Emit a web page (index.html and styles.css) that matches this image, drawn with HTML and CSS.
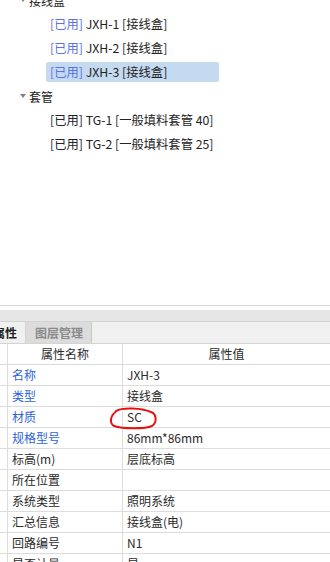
FILE: index.html
```html
<!DOCTYPE html>
<html lang="zh-CN">
<head>
    <meta charset="UTF-8">
    <meta name="viewport" content="width=device-width, initial-scale=1.0">
    <title>构件属性</title>
    <link rel="stylesheet" href="styles.css">
</head>
<body>
    <!-- 构件树 -->
    <div class="tree">
        <ul class="tree-list">
            <li class="group"><span class="arrow"></span>接线盒</li>
            <li class="item"><span class="node"><span class="used">[已用]</span> JXH-1 [接线盒]</span></li>
            <li class="item"><span class="node"><span class="used">[已用]</span> JXH-2 [接线盒]</span></li>
            <li class="item"><span class="node selected"><span class="used">[已用]</span> JXH-3 [接线盒]</span></li>
            <li class="group"><span class="arrow"></span>套管</li>
            <li class="item"><span class="node">[已用] TG-1 [一般填料套管 40]</span></li>
            <li class="item"><span class="node">[已用] TG-2 [一般填料套管 25]</span></li>
        </ul>
    </div>

    <!-- 属性面板 -->
    <div class="panel">
        <div class="band"></div>
        <div class="tabs">
            <span class="tab active">属性</span>
            <span class="tab">图层管理</span>
        </div>
        <div class="props">
            <div class="cell"></div><div class="cell head">属性名称</div><div class="cell head">属性值</div>

            <div class="cell"></div><div class="cell key">名称</div><div class="cell">JXH-3</div>
            <div class="cell"></div><div class="cell key">类型</div><div class="cell">接线盒</div>
            <div class="cell"></div><div class="cell key">材质</div>
            <div class="cell marked">SC
                <svg class="circle" width="50" height="26" viewBox="0 0 50 26">
                    <path d="M7 5 C14 1, 32 2, 42 6 C48 8, 48 17, 43 20 C36 23, 14 23, 5 20 C0 17, 1 9, 9 4" fill="none" stroke="#e5100f" stroke-width="2" stroke-linecap="round"/>
                </svg>
            </div>
            <div class="cell"></div><div class="cell key">规格型号</div><div class="cell">86mm*86mm</div>
            <div class="cell"></div><div class="cell">标高(m)</div><div class="cell">层底标高</div>
            <div class="cell"></div><div class="cell">所在位置</div><div class="cell"></div>
            <div class="cell"></div><div class="cell">系统类型</div><div class="cell">照明系统</div>
            <div class="cell"></div><div class="cell">汇总信息</div><div class="cell">接线盒(电)</div>
            <div class="cell"></div><div class="cell">回路编号</div><div class="cell">N1</div>
            <div class="cell"></div><div class="cell">是否计量</div><div class="cell">是</div>
        </div>
    </div>
</body>
</html>
```

FILE: styles.css
```css
body {
    margin: 0;
    padding: 0;
    background: #ffffff;
    color: #222;
    font-family: "Noto Sans CJK SC", sans-serif;
    font-size: 12px;
    overflow: hidden;
    height: 562px;
}

/* 构件树 */
.tree {
    height: 305px;
    overflow: hidden;
}
.tree-list {
    list-style: none;
    margin: -12px 0 0 0;
    padding: 0;
}
.tree-list li {
    display: flex;
    align-items: center;
    height: 24px;
    white-space: nowrap;
}
.group {
    padding-left: 20px;
}
.arrow {
    width: 0;
    height: 0;
    border-left: 3px solid transparent;
    border-right: 3px solid transparent;
    border-top: 4px solid #808080;
    margin-right: 3px;
}
.item {
    padding-left: 46px;
}
.node {
    display: block;
    width: 165px;
    height: 20px;
    line-height: 20px;
    padding: 0 4px;
    border-radius: 2px;
    font-size: 12.3px;
}
.node.selected {
    background: #c4daf1;
}
.used {
    color: #5a73df;
}

/* 属性面板 */
.panel {
    border-top: 1px solid #d9d9d9;
    padding-top: 4px;
}
.band {
    height: 11px;
    background: #e6e6e6;
    border-bottom: 1px solid #d2d2d2;
}
.tabs {
    display: flex;
    height: 21px;
    background: #f0f0f0;
    border-bottom: 1px solid #d4d4d4;
    margin-left: -16px;
}
.tab {
    line-height: 21px;
    padding: 0 8px 0 9px;
    font-size: 12px;
    color: #8a8a8a;
    font-weight: 600;
}
.tab.active {
    color: #222;
    background: #f0f0f0;
    border-right: 1px solid #d4d4d4;
    padding-right: 8px;
}
.tab + .tab {
    background: #dcdcdc;
    border-right: 1px solid #c8c8c8;
}

.props {
    display: grid;
    grid-template-columns: 8px 115px 1fr;
}
.cell {
    height: 20px;
    line-height: 20px;
    padding-left: 4px;
    border-right: 1px solid #dcdcdc;
    border-bottom: 1px solid #dcdcdc;
    white-space: nowrap;
    color: #2a2a2a;
}
.cell:nth-child(3n+1) {
    padding-left: 0;
}
.cell:nth-child(3n) {
    border-right: none;
}
.head {
    text-align: center;
    padding-left: 0;
}
.key {
    color: #2d63d8;
}
.marked {
    position: relative;
}
.circle {
    position: absolute;
    left: -14px;
    top: -1px;
    overflow: visible;
}
```
